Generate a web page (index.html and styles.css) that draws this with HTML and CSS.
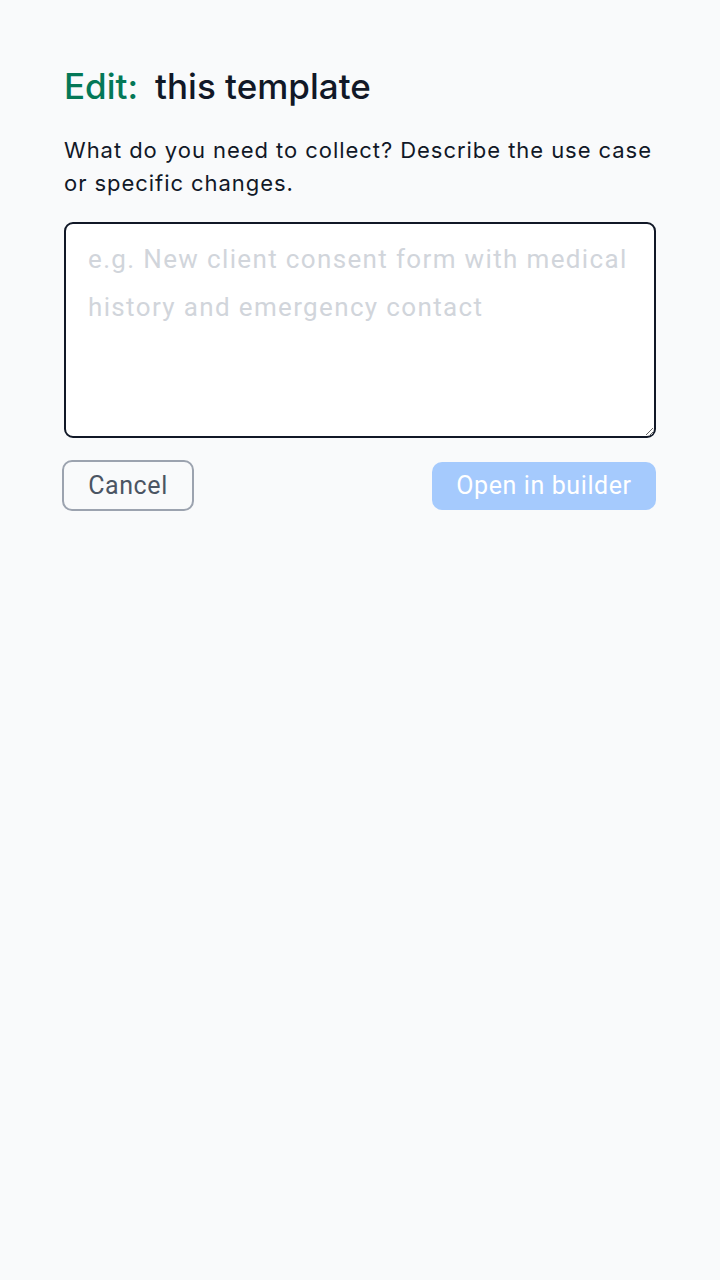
FILE: index.html
```html
<!DOCTYPE html>
<html lang="en">
<head>
<meta charset="utf-8">
<title>Edit template</title>
<link rel="stylesheet" href="styles.css">
</head>
<body>
<main class="panel">
  <h1 class="title"><span class="title-label">Edit:</span><span class="title-name">this template</span></h1>
  <p class="prompt">What do you need to collect? Describe the use case or specific changes.</p>
  <textarea class="input" placeholder="e.g. New client consent form with medical history and emergency contact"></textarea>
  <div class="actions">
    <button class="btn btn-cancel" type="button">Cancel</button>
    <button class="btn btn-primary" type="button" disabled>Open in builder</button>
  </div>
</main>
</body>
</html>
```
FILE: styles.css
```css
html, body {
  margin: 0;
  padding: 0;
  background: #f9fafb;
}
body {
  font-family: Inter, "Noto Sans", sans-serif;
  color: #111827;
}
.panel {
  padding: 62px 64px 0 64px;
  display: flex;
  flex-direction: column;
}
.title {
  margin: 0;
  font-size: 35px;
  font-weight: 500;
  line-height: 48px;
  display: flex;
  gap: 17px;
}
.title-label {
  color: #047857;
}
.title-name {
  color: #111827;
}
.prompt {
  margin: 24px 0 0 0;
  font-size: 22px;
  letter-spacing: 0.95px;
  line-height: 33px;
  color: #111827;
}
.input {
  margin-top: 22px;
  box-sizing: border-box;
  width: 100%;
  height: 216px;
  border: 2px solid #111827;
  border-radius: 9px;
  background: #ffffff;
  padding: 11px 22px;
  font-family: Roboto, "Noto Sans", sans-serif;
  font-size: 26px;
  letter-spacing: 1.35px;
  line-height: 48px;
  color: #111827;
  resize: vertical;
  outline: none;
}
.input::placeholder {
  color: #d1d5db;
}
.actions {
  margin-top: 22px;
  display: flex;
  justify-content: space-between;
  align-items: center;
}
.btn {
  font-family: Roboto, "Noto Sans", sans-serif;
  font-size: 25px;
  letter-spacing: 0.6px;
  border-radius: 10px;
  box-sizing: border-box;
  cursor: pointer;
}
.btn-cancel {
  height: 51px;
  width: 132px;
  margin-left: -2px;
  background: #f9fafb;
  border: 2px solid #9ca3af;
  color: #4b5563;
}
.btn-primary {
  height: 48px;
  width: 224px;
  background: #a5cafd;
  border: none;
  color: #ffffff;
}
```
